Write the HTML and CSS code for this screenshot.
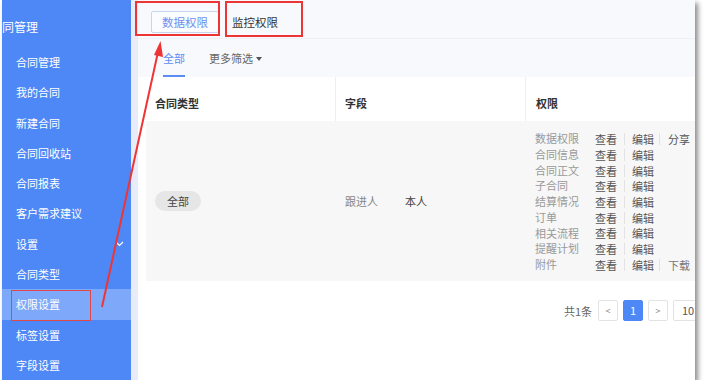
FILE: index.html
```html
<!DOCTYPE html>
<html lang="zh-CN">
<head>
  <meta charset="UTF-8" />
  <title>权限设置</title>
  <link rel="stylesheet" href="styles.css">
</head>
<body>

<div class="window">
  <aside class="sidebar">
    <div class="side-title">合同管理</div>
    <ul class="menu">
      <li>合同管理</li>
      <li>我的合同</li>
      <li>新建合同</li>
      <li>合同回收站</li>
      <li>合同报表</li>
      <li>客户需求建议</li>
      <li class="group">设置
        <svg class="chev" width="9" height="6" viewBox="0 0 9 6"><path d="M1 1l3.5 3.5L8 1" fill="none" stroke="#fff" stroke-width="1.2"/></svg>
      </li>
      <li>合同类型</li>
      <li class="active">权限设置</li>
      <li>标签设置</li>
      <li>字段设置</li>
    </ul>
  </aside>

  <div class="divider"></div>

  <main class="main">
    <div class="tabs">
      <span class="tab current">数据权限</span>
      <span class="tab">监控权限</span>
    </div>

    <div class="filters">
      <span class="filter current">全部</span>
      <span class="filter">更多筛选<i class="caret"></i></span>
    </div>

    <div class="table">
      <div class="thead">
        <div class="col c1">合同类型</div>
        <div class="col c2">字段</div>
        <div class="col c3">权限</div>
      </div>
      <div class="trow">
        <div class="col c1"><span class="pill">全部</span></div>
        <div class="col c2"><span class="field">跟进人</span><span class="value">本人</span></div>
        <div class="col c3">
          <ul class="perms">
            <li><span class="name">数据权限</span><span class="op">查看</span><span class="op">编辑</span><span class="op">分享</span></li>
            <li><span class="name">合同信息</span><span class="op">查看</span><span class="op">编辑</span></li>
            <li><span class="name">合同正文</span><span class="op">查看</span><span class="op">编辑</span></li>
            <li><span class="name">子合同</span><span class="op">查看</span><span class="op">编辑</span></li>
            <li><span class="name">结算情况</span><span class="op">查看</span><span class="op">编辑</span></li>
            <li><span class="name">订单</span><span class="op">查看</span><span class="op">编辑</span></li>
            <li><span class="name">相关流程</span><span class="op">查看</span><span class="op">编辑</span></li>
            <li><span class="name">提醒计划</span><span class="op">查看</span><span class="op">编辑</span></li>
            <li><span class="name">附件</span><span class="op">查看</span><span class="op">编辑</span><span class="op light">下载</span></li>
          </ul>
        </div>
      </div>
    </div>

    <div class="pager">
      <span class="total">共1条</span>
      <span class="pbtn">&lt;</span>
      <span class="pbtn on">1</span>
      <span class="pbtn">&gt;</span>
      <span class="psize">10</span>
    </div>
  </main>

  <!-- annotations drawn over the screenshot -->
  <div class="mark m1"></div>
  <div class="mark m2"></div>
  <div class="mark m3"></div>
  <svg class="arrow" width="704" height="388" viewBox="0 0 704 388">
    <line x1="102" y1="307" x2="158" y2="52" stroke="#ee3535" stroke-width="2"/>
    <polygon points="160.5,41 154,55 163,57" fill="#ee3535"/>
  </svg>
</div>

</body>
</html>
```

FILE: styles.css
```css
html, body {
  margin: 0;
  background: #fff;
}
body {
  font-family: "Noto Sans CJK SC", "Noto Sans", sans-serif;
  font-size: 11px;
  color: #333;
}
ul {
  list-style: none;
  margin: 0;
  padding: 0;
}
.window {
  position: relative;
  margin-left: 2px;
  width: 693px;
  height: 380px;
  display: flex;
  box-shadow: 3px 3px 5px rgba(0,0,0,0.45);
  background: #fff;
}
.sidebar {
  width: 129px;
  background: #4e88f6;
  color: #fff;
  overflow: hidden;
  flex-shrink: 0;
}
.side-title {
  height: 47px;
  line-height: 54px;
  font-size: 12px;
  text-indent: -12px;
  white-space: nowrap;
}
.menu li {
  height: 30.3px;
  line-height: 30px;
  padding-left: 14px;
  font-size: 11px;
  position: relative;
}
.menu li.active {
  background: #7ea8fa;
}
.menu .chev {
  position: absolute;
  right: 7px;
  top: 12px;
}
.divider {
  width: 7px;
  background: #e8ecf8;
  flex-shrink: 0;
}
.main {
  flex: 1;
  min-width: 0;
  background: #fff;
  overflow: hidden;
}
.tabs {
  height: 39px;
  background: #f8f9fc;
  border-bottom: 1px solid #edf0f6;
  display: flex;
  align-items: center;
  padding-left: 13px;
  padding-top: 6px;
  box-sizing: border-box;
}
.tab {
  font-size: 11.5px;
  line-height: 20px;
  margin-right: 13px;
}
.tab.current {
  color: #6e8ff0;
  border: 1px solid #c8d5f2;
  border-radius: 2px;
  background: #fbfcff;
  padding: 0 10px;
}
.filters {
  height: 38px;
  background: #f8f9fc;
  display: flex;
  padding-left: 25px;
  box-sizing: border-box;
}
.filter {
  font-size: 11px;
  line-height: 38px;
  color: #666;
  margin-right: 24px;
  height: 36px;
}
.filter.current {
  color: #5b8cf4;
  border-bottom: 2px solid #5b8cf4;
}
.caret {
  display: inline-block;
  margin-left: 3px;
  vertical-align: 2px;
  border-left: 3px solid transparent;
  border-right: 3px solid transparent;
  border-top: 4px solid #555;
}
.table {
  margin-left: 8px;
}
.thead, .trow {
  display: flex;
}
.thead {
  height: 44px;
  align-items: stretch;
}
.thead .col {
  font-weight: bold;
  font-size: 11px;
  color: #333;
  padding-top: 9px;
  line-height: 34px;
}
.thead .c2, .thead .c3 {
  border-left: 1px solid #eeeeee;
}
.col {
  box-sizing: border-box;
  padding-left: 9px;
  flex-shrink: 0;
}
.c1 { width: 189px; }
.c2 { width: 190px; }
.c3 { width: 200px; }
.thead .c3 { padding-left: 10px; }
.trow {
  height: 160px;
  background: #f7f7f7;
  align-items: center;
}
.pill {
  display: inline-block;
  background: #e6e6e6;
  border-radius: 10px;
  padding: 0 12px;
  line-height: 20px;
  color: #444;
}
.field {
  color: #888;
  margin-left: 1px;
  margin-right: 27px;
}
.value {
  color: #444;
}
.trow .c3 {
  padding-left: 10px;
  padding-top: 2px;
}
.perms li {
  display: flex;
  height: 15.7px;
  line-height: 15.7px;
  align-items: center;
  white-space: nowrap;
}
.perms .name {
  width: 60px;
  flex-shrink: 0;
  color: #999;
}
.perms .op {
  flex-shrink: 0;
  color: #555;
  padding: 0 7px;
  line-height: 12px;
  border-left: 1px solid #e2e2e2;
}
.perms .op:nth-child(2) {
  border-left: none;
  padding-left: 0;
}
.perms .op:nth-child(3) {
  padding-right: 5px;
}
.perms .op:nth-child(4) {
  padding-left: 8px;
}
.perms .op.light {
  color: #777;
}
.pager {
  display: flex;
  justify-content: flex-end;
  align-items: center;
  margin-top: 19px;
  margin-right: -10px;
  font-size: 11px;
}
.total {
  color: #666;
  margin-right: 6px;
}
.pbtn, .psize {
  box-sizing: border-box;
  height: 21px;
  width: 20px;
  line-height: 19px;
  border: 1px solid #e3e3e3;
  border-radius: 2px;
  text-align: center;
  color: #888;
  font-size: 9px;
  margin-right: 5px;
}
.pbtn.on {
  background: #4e88f6;
  border-color: #4e88f6;
  color: #fff;
  font-size: 11px;
}
.psize {
  width: 32px;
  color: #555;
  font-size: 11px;
  text-align: left;
  padding-left: 8px;
  margin-right: 0;
}
.mark {
  position: absolute;
  border: 2px solid #ee3535;
  box-sizing: border-box;
}
.m1 { left: 133px; top: 1px; width: 85px; height: 35px; }
.m2 { left: 223px; top: 1px; width: 78px; height: 36px; }
.m3 { left: 9px; top: 290px; width: 80px; height: 31px; border-width: 1px; border-color: #e0474b; }
.arrow {
  position: absolute;
  left: -2px;
  top: 0;
  pointer-events: none;
}
```
